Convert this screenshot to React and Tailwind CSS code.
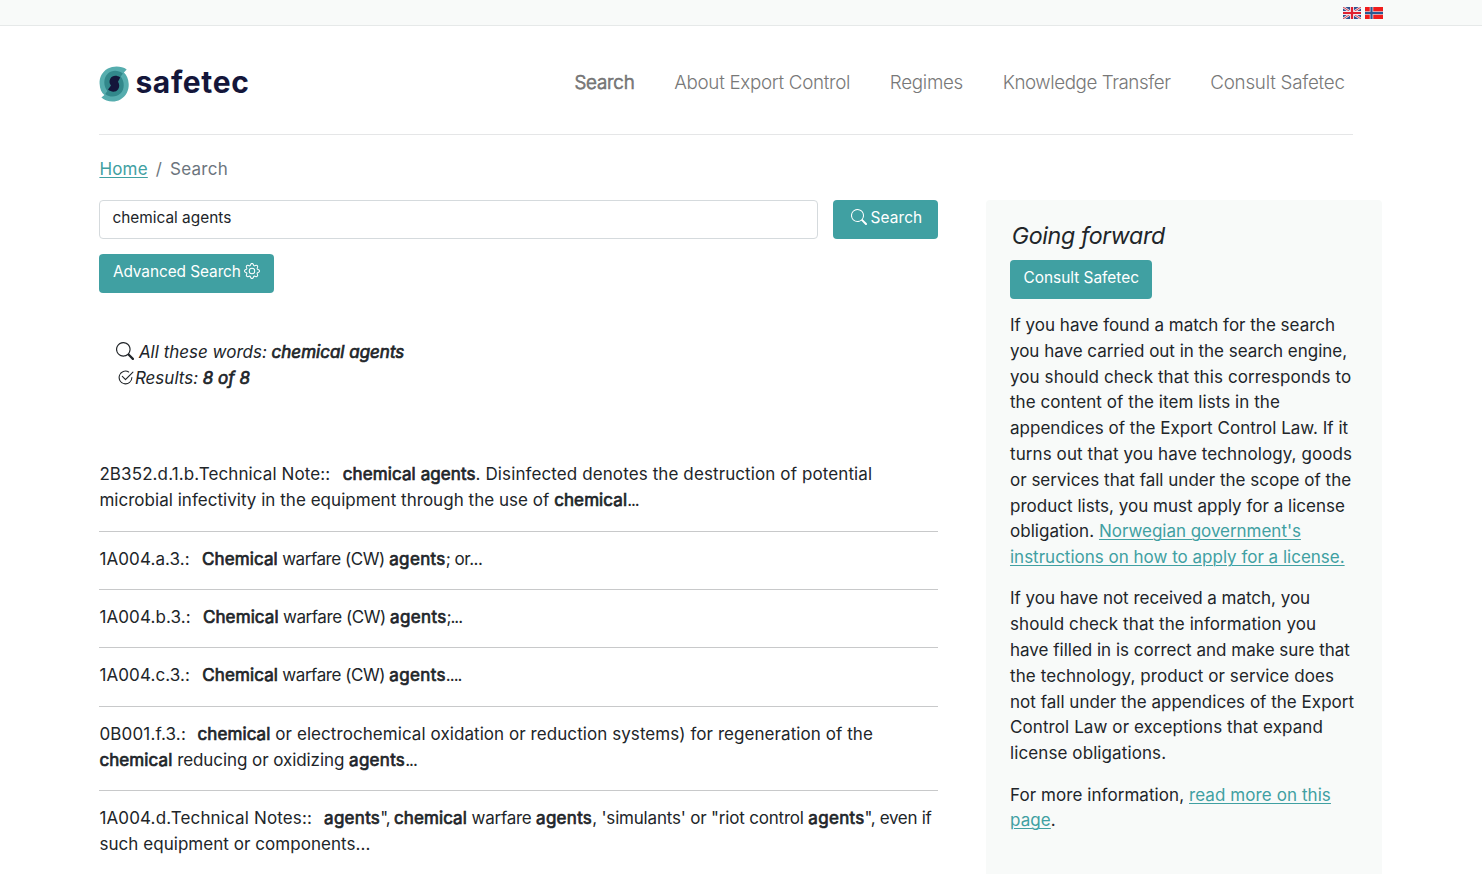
import { BsSearch, BsGear, BsCheck2Circle } from "react-icons/bs";

function B({ children, className = "tracking-[0.1px]" }) {
  return <strong className={"font-normal [-webkit-text-stroke:0.7px_#212529] " + className}>{children}</strong>;
}

function T({ children, className = "" }) {
  return <span className={className}>{children}</span>;
}

function Line({ children, className = "" }) {
  return <span className={"block whitespace-pre " + className}>{children}</span>;
}

function Result({ children }) {
  return <li className="border-b border-[#c8c9ca] pt-[14px] pb-[17.35px] leading-[26px]">{children}</li>;
}

const link = "text-[#40a0a2] underline decoration-1 underline-offset-[2px]";
const button = "flex h-[39px] rounded-[4px] bg-[#40a0a2] pt-[6px] text-[15.4px] leading-[24px] text-white whitespace-pre";

function Logo() {
  return (
    <a href="#" className="flex h-[38px] items-center">
      <svg width="30" height="38" viewBox="-0.4 -1 30 38" className="shrink-0">
        <path d="M27.3 3.4C22-.2 14-.4 8.5 2.6C2.5 6 0 11.5.2 17.5C.4 23 2 26.5 5 29L2 31.5C7 36 15 37 21 33.5C27 30 29.6 24 29.3 18C29 13 27.5 9.5 24.5 6.5Z" fill="#56adae" />
        <path d="M23.5 7.6C18.8 3.8 12.6 3.9 8.6 7.4C3.8 11.6 3.8 20 8 25L5.8 28C10.4 31.6 17 31.4 21 27.6C25.4 23.4 25.4 15.4 21.3 10.4Z" fill="#32888b" />
        <path d="M20.8 11.4C17.2 9 12.8 9.4 11 12.4C9.4 15.2 10 17.4 11.6 19.6L8.6 23.6C12 26.6 16.6 26.4 18.8 23.2C20.4 20.8 20 18 18.6 15.8Z" fill="#14163a" />
      </svg>
      <span className="ml-[6px] -mt-[5px] text-[30px] leading-[36px] font-bold tracking-[0.65px] text-[#14163a]">safetec</span>
    </a>
  );
}

function Flags() {
  return (
    <div className="flex gap-[4px]">
      <svg width="18" height="12" viewBox="0 0 18 12">
        <path fill="#30508f" d="M0 0h18v12H0z" />
        <path stroke="#f0e8ee" strokeWidth="2.4" d="M0 0l18 12M18 0L0 12" />
        <path stroke="#d8404c" strokeWidth="1" d="M0 0l18 12M18 0L0 12" />
        <path stroke="#f0e8ee" strokeWidth="4" d="M9 0v12M0 6h18" />
        <path stroke="#e02030" strokeWidth="2.2" d="M9 0v12M0 6h18" />
      </svg>
      <svg width="18" height="12" viewBox="0 0 18 12">
        <path fill="#f01c1c" d="M0 0h18v12H0z" />
        <path stroke="#dcc8d4" strokeWidth="3.6" d="M6.5 0v12M0 6h18" />
        <path stroke="#285a94" strokeWidth="2" d="M6.5 0v12M0 6h18" />
      </svg>
    </div>
  );
}

export default function App() {
  return (
    <div className="h-[874px] overflow-hidden bg-white font-['Inter',sans-serif] text-[17px] leading-[25.8px] text-[#212529]">
      <div className="flex h-[26px] justify-end border-b border-[#e6e9e9] bg-[#f8faf9] pt-[7px] pr-[99.4px]">
        <Flags />
      </div>

      <header className="mr-[129.5px] ml-[99.4px] flex h-[109px] justify-between border-b border-[#e5e6e7] pt-[39px] pr-[7.8px]">
        <Logo />
        <nav className="flex gap-[39.7px] pt-[5px] text-[18.8px] font-light whitespace-nowrap text-[#787878]">
          <a href="#" className="tracking-[-0.2px] [-webkit-text-stroke:0.7px_#747474]">Search</a>
          <a href="#" className="tracking-[-0.3px]">About Export Control</a>
          <a href="#" className="tracking-[-0.3px]">Regimes</a>
          <a href="#" className="tracking-[-0.43px]">Knowledge Transfer</a>
          <a href="#" className="tracking-[-0.25px]">Consult Safetec</a>
        </nav>
      </header>

      <div className="flex h-[65px] pt-[22px] pl-[99.4px] text-[#6c757d]">
        <a href="#" className={"tracking-[0.2px] " + link}>Home</a>
        <span className="px-[8px]">/</span>
        <span className="tracking-[0.26px]">Search</span>
      </div>

      <div className="flex items-start pl-[99.4px]">
        <main className="w-[839px] shrink-0">
          <div className="flex justify-between">
            <div className="h-[39px] w-[719px] rounded-[4px] border border-[#d5dadd] pt-[5px] pl-[12px] text-[15.4px] leading-[24px]">chemical agents</div>
            <button className={button + " w-[105px] pl-[17.5px]"}>
              <BsSearch className="mt-[3px] mr-[3.5px] size-[16px]" />
              <span className="tracking-[0.15px]">Search</span>
            </button>
          </div>
          <button className={button + " mt-[15.4px] w-[174.5px] pl-[13.5px]"}>
            <span className="tracking-[-0.07px]">Advanced Search</span>
            <BsGear className="mt-[3px] ml-[3.5px] size-[16px]" />
          </button>

          <div className="mt-[46.4px] h-[107.6px] pl-[16.5px] italic">
            <div className="flex whitespace-pre">
              <BsSearch className="mt-[2px] mr-[5px] size-[18px]" />
              <T>All these words: </T>
              <B className="tracking-[0px]">chemical agents</B>
            </div>
            <div className="flex whitespace-pre">
              <BsCheck2Circle className="mt-[3px] mr-[1px] ml-[1px] size-[17px]" />
              <T>Results: </T>
              <B className="tracking-[0px]">8 of 8</B>
            </div>
          </div>

          <ul>
            <Result>
              <Line>
                <T className="mr-[12.5px] tracking-[0.107px]">2B352.d.1.b.Technical Note::</T>
                <B>chemical agents</B>
                <T className="tracking-[0.105px]">. Disinfected denotes the destruction of potential</T>
              </Line>
              <Line>
                <T className="tracking-[0.03px]">microbial infectivity in the equipment through the use of </T>
                <B>chemical</B>
                <T className="tracking-[-1.1px]">...</T>
              </Line>
            </Result>
            <Result>
              <Line>
                <T className="mr-[12.3px] tracking-[0.1px]">1A004.a.3.:</T>
                <B>Chemical</B>
                <T className="tracking-[-0.45px]"> warfare (CW) </T>
                <B className="tracking-[0.37px]">agents</B>
                <T className="tracking-[-0.5px]">; or...</T>
              </Line>
            </Result>
            <Result>
              <Line>
                <T className="mr-[12.3px] tracking-[0.1px]">1A004.b.3.:</T>
                <B>Chemical</B>
                <T className="tracking-[-0.45px]"> warfare (CW) </T>
                <B className="tracking-[0.37px]">agents</B>
                <T className="tracking-[-1.1px]">;...</T>
              </Line>
            </Result>
            <Result>
              <Line>
                <T className="mr-[12.3px] tracking-[0.1px]">1A004.c.3.:</T>
                <B>Chemical</B>
                <T className="tracking-[-0.45px]"> warfare (CW) </T>
                <B className="tracking-[0.37px]">agents</B>
                <T className="tracking-[-1px]">....</T>
              </Line>
            </Result>
            <Result>
              <Line>
                <T className="mr-[11.5px] tracking-[0.16px]">0B001.f.3.:</T>
                <B>chemical</B>
                <T className="tracking-[0.067px]"> or electrochemical oxidation or reduction systems) for regeneration of the</T>
              </Line>
              <Line>
                <B>chemical</B>
                <T className="tracking-[-0.07px]"> reducing or oxidizing </T>
                <B className="tracking-[0.3px]">agents</B>
                <T className="tracking-[-1px]">...</T>
              </Line>
            </Result>
            <Result>
              <Line>
                <T className="mr-[12px] tracking-[0.145px]">1A004.d.Technical Notes::</T>
                <B className="tracking-[0.3px]">agents</B>
                <T className="tracking-[-0.8px]">", </T>
                <B>chemical</B>
                <T className="tracking-[-0.25px]"> warfare </T>
                <B className="tracking-[0.3px]">agents</B>
                <T className="tracking-[-0.19px]">, 'simulants' or "riot control </T>
                <B className="tracking-[0.3px]">agents</B>
                <T className="tracking-[-0.32px]">", even if</T>
              </Line>
              <Line className="tracking-[0.05px]">such equipment or components...</Line>
            </Result>
          </ul>
        </main>

        <aside className="ml-[48px] h-[680px] w-[396px] shrink-0 rounded-t-[4px] bg-[#f8faf9] pt-[22px] pl-[23.6px]">
          <h2 className="ml-[1.8px] text-[23.2px] leading-[28px] tracking-[-0.34px] italic">Going forward</h2>
          <button className={button + " mt-[10px] w-[142.5px] pl-[13.5px]"}>Consult Safetec</button>
          <p className="mt-[14px] mb-[15.5px]">
            <Line>If you have found a match for the search</Line>
            <Line className="tracking-[-0.02px]">you have carried out in the search engine,</Line>
            <Line className="tracking-[0.097px]">you should check that this corresponds to</Line>
            <Line className="tracking-[0.07px]">the content of the item lists in the</Line>
            <Line className="tracking-[0.025px]">appendices of the Export Control Law. If it</Line>
            <Line className="tracking-[0.09px]">turns out that you have technology, goods</Line>
            <Line className="tracking-[0.01px]">or services that fall under the scope of the</Line>
            <Line className="tracking-[0.02px]">product lists, you must apply for a license</Line>
            <Line>
              <T className="tracking-[0.05px]">obligation. </T>
              <a href="#" className={"tracking-[-0.03px] " + link}>Norwegian government's</a>
            </Line>
            <Line><a href="#" className={link}>instructions on how to apply for a license.</a></Line>
          </p>
          <p className="mb-[15.5px]">
            <Line className="tracking-[-0.02px]">If you have not received a match, you</Line>
            <Line className="tracking-[0.08px]">should check that the information you</Line>
            <Line>have filled in is correct and make sure that</Line>
            <Line className="tracking-[0.09px]">the technology, product or service does</Line>
            <Line className="tracking-[0.02px]">not fall under the appendices of the Export</Line>
            <Line className="tracking-[0.09px]">Control Law or exceptions that expand</Line>
            <Line className="tracking-[0.1px]">license obligations.</Line>
          </p>
          <p>
            <Line>
              <T className="tracking-[0.07px]">For more information, </T>
              <a href="#" className={"tracking-[0.08px] " + link}>read more on this</a>
            </Line>
            <Line><a href="#" className={"tracking-[0.1px] " + link}>page</a>.</Line>
          </p>
        </aside>
      </div>
    </div>
  );
}
